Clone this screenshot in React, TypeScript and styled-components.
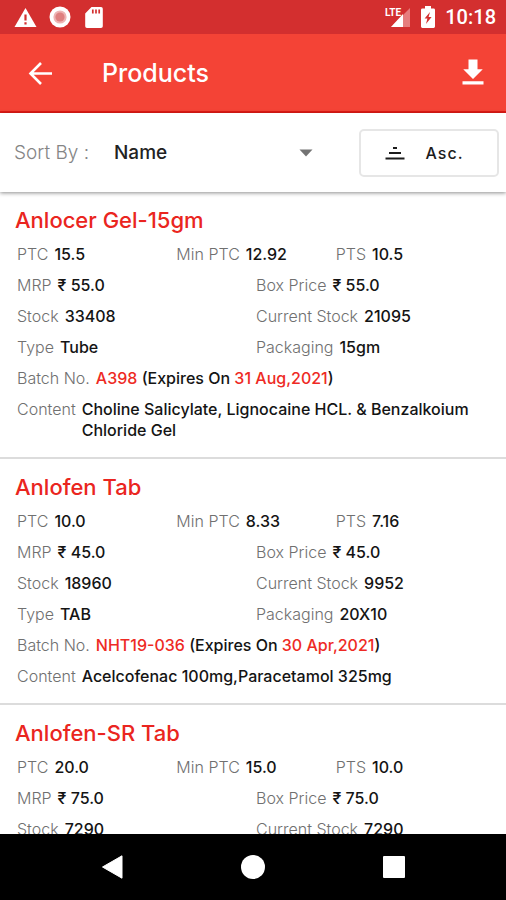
import React from "react";
import styled, { createGlobalStyle } from "styled-components";

const GlobalStyle = createGlobalStyle`
  * { box-sizing: border-box; }
  body { margin: 0; background: #fff; font-family: Inter, "Noto Sans", sans-serif; }
  button, select { font-family: inherit; }
`;

const Screen = styled.div`
  display: flex;
  flex-direction: column;
  height: 100vh;
  overflow: hidden;
  background: #fff;
`;

const StatusBar = styled.div`
  display: flex;
  align-items: center;
  justify-content: space-between;
  flex: none;
  height: 34px;
  padding: 0 10px 0 14px;
  background: #d32f2f;
  color: #fff;
`;

const StatusGroup = styled.div<{ $gap: number }>`
  display: flex;
  align-items: center;
  gap: ${(p) => p.$gap}px;
`;

const Clock = styled.time`
  font: 500 20px/24px Roboto, sans-serif;
`;

const AppBar = styled.header`
  display: flex;
  align-items: center;
  flex: none;
  height: 79px;
  padding: 0 15px 0 22px;
  background: #f44336;
  border-bottom: 2px solid #e21b16;
  color: #fff;
`;

const Title = styled.h1`
  flex: 1;
  margin: 0 0 0 44px;
  font-size: 25px;
  font-weight: 500;
  line-height: 32px;
`;

const IconButton = styled.button`
  display: flex;
  padding: 0;
  border: 0;
  background: none;
  color: inherit;
  cursor: pointer;
`;

const SortBar = styled.div`
  display: flex;
  align-items: center;
  flex: none;
  height: 79px;
  padding: 0 7px 0 14px;
  background: #fff;
  box-shadow: 0 1px 4px rgba(0, 0, 0, 0.45);
  z-index: 1;
`;

const SortLabel = styled.label`
  width: 100px;
  color: #858585;
  font-size: 19px;
  font-weight: 300;
  line-height: 24px;
`;

const SelectWrap = styled.div`
  display: flex;
  align-items: center;
  flex: 1;
  min-width: 0;
  margin-right: 46px;
`;

const Select = styled.select`
  flex: 1;
  min-width: 0;
  height: 40px;
  margin-right: -14px;
  padding: 0;
  appearance: none;
  border: 0;
  background: none;
  color: #222;
  font-size: 19px;
  font-weight: 500;
`;

const OrderButton = styled.button`
  display: flex;
  align-items: center;
  justify-content: center;
  gap: 21px;
  width: 140px;
  height: 48px;
  padding: 0 10px 0 0;
  border: 2px solid #e6e6e6;
  border-radius: 5px;
  background: #fff;
  color: #1c1c1c;
  font-size: 16px;
  font-weight: 500;
  letter-spacing: 1px;
  cursor: pointer;
`;

const List = styled.main`
  flex: 1;
  min-height: 0;
  overflow-y: auto;
  scrollbar-width: none;
`;

const Card = styled.article`
  display: flex;
  flex-direction: column;
  gap: 10px;
  padding: 14px 11px 16px 17px;
  border-bottom: 2px solid #dcdcdc;
`;

const Name = styled.h2`
  margin: 0 0 0 -2px;
  color: #ea2520;
  font-size: 22px;
  font-weight: 500;
  line-height: 28px;
`;

const Row = styled.div<{ $columns: number }>`
  display: grid;
  grid-template-columns: repeat(${(p) => p.$columns}, 1fr);
`;

const Field = styled.div`
  display: flex;
  gap: 6px;
  font-size: 16px;
  line-height: 21px;
`;

const Label = styled.span`
  flex: none;
  color: #707070;
  font-weight: 300;
`;

const Value = styled.span`
  color: #141414;
  font-weight: 500;
`;

const Accent = styled.span`
  color: #ee2a24;
`;

const NavBar = styled.nav`
  display: flex;
  flex: none;
  height: 66px;
  padding: 0 42px;
  background: #000;
`;

const NavButton = styled(IconButton)`
  flex: 1;
  align-items: center;
  justify-content: center;
  color: #fff;
`;

type Product = {
  name: string;
  ptc: string;
  minPtc: string;
  pts: string;
  price: string;
  stock: string;
  current: string;
  type?: string;
  packaging?: string;
  batch?: string;
  expires?: string;
  content?: string;
};

const products: Product[] = [
  {
    name: "Anlocer Gel-15gm", ptc: "15.5", minPtc: "12.92", pts: "10.5", price: "55.0",
    stock: "33408", current: "21095", type: "Tube", packaging: "15gm",
    batch: "A398", expires: "31 Aug,2021",
    content: "Choline Salicylate, Lignocaine HCL. & Benzalkoium Chloride Gel",
  },
  {
    name: "Anlofen Tab", ptc: "10.0", minPtc: "8.33", pts: "7.16", price: "45.0",
    stock: "18960", current: "9952", type: "TAB", packaging: "20X10",
    batch: "NHT19-036", expires: "30 Apr,2021",
    content: "Acelcofenac 100mg,Paracetamol 325mg",
  },
  {
    name: "Anlofen-SR Tab", ptc: "20.0", minPtc: "15.0", pts: "10.0", price: "75.0",
    stock: "7290", current: "7290",
  },
];

function Item({ label, children }: { label: string; children: React.ReactNode }) {
  return (
    <Field>
      <Label>{label}</Label>
      <Value>{children}</Value>
    </Field>
  );
}

function ProductCard({ product: p }: { product: Product }) {
  return (
    <Card>
      <Name>{p.name}</Name>
      <Row $columns={3}>
        <Item label="PTC">{p.ptc}</Item>
        <Item label="Min PTC">{p.minPtc}</Item>
        <Item label="PTS">{p.pts}</Item>
      </Row>
      <Row $columns={2}>
        <Item label="MRP">₹ {p.price}</Item>
        <Item label="Box Price">₹ {p.price}</Item>
      </Row>
      <Row $columns={2}>
        <Item label="Stock">{p.stock}</Item>
        <Item label="Current Stock">{p.current}</Item>
      </Row>
      {p.type && (
        <Row $columns={2}>
          <Item label="Type">{p.type}</Item>
          <Item label="Packaging">{p.packaging}</Item>
        </Row>
      )}
      {p.batch && (
        <Item label="Batch No.">
          <Accent>{p.batch}</Accent> (Expires On <Accent>{p.expires}</Accent>)
        </Item>
      )}
      {p.content && <Item label="Content">{p.content}</Item>}
    </Card>
  );
}

export default function App() {
  return (
    <Screen>
      <GlobalStyle />
      <StatusBar>
        <StatusGroup $gap={12}>
          <svg width="23" height="21" viewBox="0 0 23 21" aria-hidden="true">
            <path d="M11.5 1 22.5 20H.5z" fill="#fff" />
            <path d="M11.5 7.5v6M11.5 15.2v2.4" stroke="#d32f2f" strokeWidth="2.2" />
          </svg>
          <svg width="22" height="22" viewBox="0 0 22 22" aria-hidden="true">
            <circle cx="11" cy="11" r="10.5" fill="#fff" />
            <circle cx="11" cy="11" r="6.6" fill="#eeb4b4" />
            <circle cx="11" cy="11" r="4.6" fill="#df8080" />
          </svg>
          <svg width="20" height="21" viewBox="-2 0 20 21" aria-hidden="true">
            <path d="M6.5 0H16a1.8 1.8 0 0 1 1.8 1.8v17.4A1.8 1.8 0 0 1 16 21H2a1.8 1.8 0 0 1-1.8-1.8V6.5z" fill="#fff" />
            <path d="M7.8 2.5v4M11 2.5v4M14.2 2.5v4" stroke="#d32f2f" strokeWidth="1.7" />
          </svg>
        </StatusGroup>
        <StatusGroup $gap={10}>
          <svg width="26" height="22" viewBox="0 0 26 22" aria-hidden="true">
            <path d="M25 2v19H6z" fill="#e67d7d" />
            <path d="M18 8v13H6z" fill="#fff" />
            <path d="M0 0h14v11H0z" fill="#d32f2f" />
            <text x="0" y="10" fill="#fff" fontFamily="Roboto, sans-serif" fontSize="10" fontWeight="700">
              LTE
            </text>
          </svg>
          <svg width="14" height="22" viewBox="0 0 14 22" aria-hidden="true">
            <path d="M4 0h6v2.5h2.6A1.4 1.4 0 0 1 14 4v16.5a1.4 1.4 0 0 1-1.4 1.4H1.4A1.4 1.4 0 0 1 0 20.5V4a1.4 1.4 0 0 1 1.4-1.5H4z" fill="#fff" />
            <path d="M9 6 3.6 12.6H6.4L5 18 10.6 11H7.6z" fill="#d32f2f" />
          </svg>
          <Clock>10:18</Clock>
        </StatusGroup>
      </StatusBar>

      <AppBar>
        <IconButton aria-label="Back">
          <svg width="36" height="36" viewBox="0 0 36 36" fill="none" stroke="#fff" strokeWidth="2.6">
            <path d="M30 18.5H9M19 8 8.5 18.5 19 29" />
          </svg>
        </IconButton>
        <Title>Products</Title>
        <IconButton aria-label="Download">
          <svg width="36" height="36" viewBox="0 0 24 24" fill="#fff">
            <path d="M18.5 9.5H15V3H9v6.5H5.5L12 16zM5 17.5v2.2h14v-2.2z" />
          </svg>
        </IconButton>
      </AppBar>

      <SortBar>
        <SortLabel htmlFor="sort">Sort By :</SortLabel>
        <SelectWrap>
          <Select id="sort" defaultValue="Name">
            <option>Name</option>
          </Select>
          <svg width="14" height="8" viewBox="0 0 14 8" aria-hidden="true" pointerEvents="none">
            <path d="M.5.5h13L7 7.5z" fill="#737373" />
          </svg>
        </SelectWrap>
        <OrderButton>
          <svg width="20" height="14" viewBox="0 0 20 14" aria-hidden="true" stroke="#1c1c1c" strokeWidth="2">
            <path d="M8 2h4M4 7h12M.5 12.5h19" />
          </svg>
          Asc.
        </OrderButton>
      </SortBar>

      <List>
        {products.map((p) => (
          <ProductCard key={p.name} product={p} />
        ))}
      </List>

      <NavBar>
        <NavButton aria-label="Back">
          <svg width="22" height="24" viewBox="0 0 22 24">
            <path d="M21 .8v22.4L1.500 12z" fill="#fff" stroke="#fff" strokeLinejoin="round" />
          </svg>
        </NavButton>
        <NavButton aria-label="Home">
          <svg width="24" height="24" viewBox="0 0 24 24">
            <circle cx="12" cy="12" r="12" fill="#fff" />
          </svg>
        </NavButton>
        <NavButton aria-label="Recent apps">
          <svg width="22" height="22" viewBox="0 0 22 22">
            <rect width="22" height="22" rx="1" fill="#fff" />
          </svg>
        </NavButton>
      </NavBar>
    </Screen>
  );
}
